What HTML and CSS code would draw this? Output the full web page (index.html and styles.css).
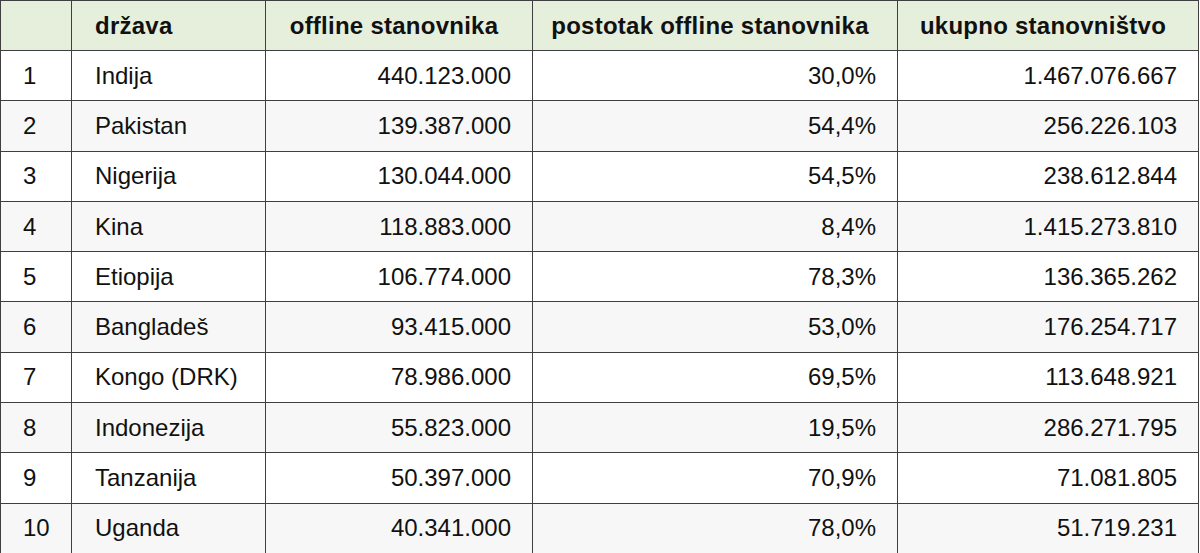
FILE: index.html
```html
<!DOCTYPE html>
<html lang="hr">
<head>
<meta charset="utf-8">
<title>Offline stanovnici</title>
<link rel="stylesheet" href="styles.css">
</head>
<body>
<table class="data">
  <colgroup>
    <col class="c-rank">
    <col class="c-country">
    <col class="c-offline">
    <col class="c-pct">
    <col class="c-total">
  </colgroup>
  <thead>
    <tr>
      <th></th>
      <th class="left">država</th>
      <th>offline stanovnika</th>
      <th>postotak offline stanovnika</th>
      <th>ukupno stanovništvo</th>
    </tr>
  </thead>
  <tbody>
    <tr><td>1</td><td class="left">Indija</td><td class="num">440.123.000</td><td class="num">30,0%</td><td class="num">1.467.076.667</td></tr>
    <tr><td>2</td><td class="left">Pakistan</td><td class="num">139.387.000</td><td class="num">54,4%</td><td class="num">256.226.103</td></tr>
    <tr><td>3</td><td class="left">Nigerija</td><td class="num">130.044.000</td><td class="num">54,5%</td><td class="num">238.612.844</td></tr>
    <tr><td>4</td><td class="left">Kina</td><td class="num">118.883.000</td><td class="num">8,4%</td><td class="num">1.415.273.810</td></tr>
    <tr><td>5</td><td class="left">Etiopija</td><td class="num">106.774.000</td><td class="num">78,3%</td><td class="num">136.365.262</td></tr>
    <tr><td>6</td><td class="left">Bangladeš</td><td class="num">93.415.000</td><td class="num">53,0%</td><td class="num">176.254.717</td></tr>
    <tr><td>7</td><td class="left">Kongo (DRK)</td><td class="num">78.986.000</td><td class="num">69,5%</td><td class="num">113.648.921</td></tr>
    <tr><td>8</td><td class="left">Indonezija</td><td class="num">55.823.000</td><td class="num">19,5%</td><td class="num">286.271.795</td></tr>
    <tr><td>9</td><td class="left">Tanzanija</td><td class="num">50.397.000</td><td class="num">70,9%</td><td class="num">71.081.805</td></tr>
    <tr><td>10</td><td class="left">Uganda</td><td class="num">40.341.000</td><td class="num">78,0%</td><td class="num">51.719.231</td></tr>
  </tbody>
</table>
</body>
</html>
```
FILE: styles.css
```css
html, body {
  margin: 0;
  padding: 0;
  background: #ffffff;
}

body {
  font-family: "Liberation Sans", Arial, sans-serif;
  color: #111111;
  overflow: hidden;
}

.data {
  border-collapse: collapse;
  table-layout: fixed;
  width: 1198px;
  font-size: 24px;
}

.c-rank { width: 71px; }
.c-country { width: 194px; }
.c-offline { width: 267px; }
.c-pct { width: 365px; }
.c-total { width: 301px; }

.data th,
.data td {
  border: 1px solid #3f3f3f;
  height: 49.3px;
  padding: 0 21px 0 21px;
  vertical-align: middle;
  white-space: nowrap;
}

.data th {
  height: 49px;
  background: #e6efdc;
  font-weight: bold;
  text-align: center;
  padding: 0 16px 0 6px;
  letter-spacing: 0.25px;
  color: #111111;
}

.data th.left {
  text-align: left;
  padding-left: 23px;
}

.data td {
  text-align: left;
}

.data td:first-child {
  padding-left: 22px;
}

.data td.left {
  padding-left: 23px;
}

.data td.num {
  text-align: right;
}

.data tbody tr:nth-child(even) td {
  background: #f7f7f7;
}
```
